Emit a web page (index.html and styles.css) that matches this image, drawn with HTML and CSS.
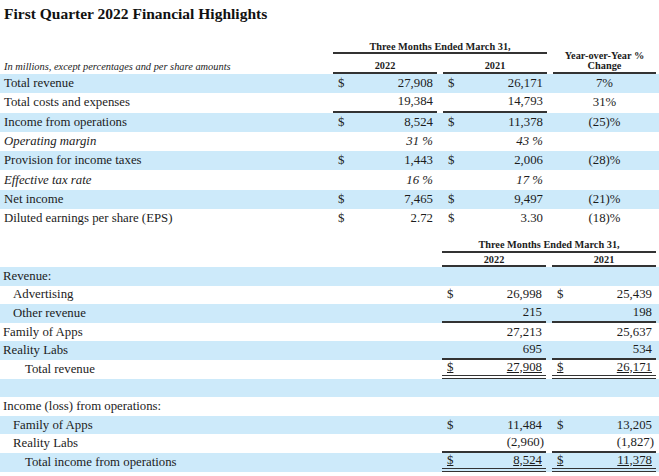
FILE: index.html
```html
<!DOCTYPE html>
<html lang="en">
<head>
<meta charset="utf-8">
<title>First Quarter 2022 Financial Highlights</title>
<link rel="stylesheet" href="styles.css">
</head>
<body>
<div class="page">
  <h1 class="title">First Quarter 2022 Financial Highlights</h1>

  <section class="summary">
    <div class="head-grid">
      <div class="h-span rule-h">Three Months Ended March 31,</div>
      <div class="h-note">In millions, except percentages and per share amounts</div>
      <div class="h-y1 rule-h">2022</div>
      <div class="h-y2 rule-h">2021</div>
      <div class="h-chg rule-h">Year-over-Year %<br>Change</div>
    </div>

    <div class="row blue"><div class="lab">Total revenue</div><div class="amt"><span>$</span><span>27,908</span></div><div class="gap"></div><div class="amt"><span>$</span><span>26,171</span></div><div class="gap"></div><div class="chg">7%</div></div>
    <div class="row"><div class="lab">Total costs and expenses</div><div class="amt rule"><span></span><span>19,384</span></div><div class="gap"></div><div class="amt rule"><span></span><span>14,793</span></div><div class="gap"></div><div class="chg">31%</div></div>
    <div class="row blue"><div class="lab">Income from operations</div><div class="amt"><span>$</span><span>8,524</span></div><div class="gap"></div><div class="amt"><span>$</span><span>11,378</span></div><div class="gap"></div><div class="chg">(25)%</div></div>
    <div class="row"><div class="lab it">Operating margin</div><div class="amt it"><span></span><span>31 %</span></div><div class="gap"></div><div class="amt it"><span></span><span>43 %</span></div><div class="gap"></div><div class="chg"></div></div>
    <div class="row blue"><div class="lab">Provision for income taxes</div><div class="amt"><span>$</span><span>1,443</span></div><div class="gap"></div><div class="amt"><span>$</span><span>2,006</span></div><div class="gap"></div><div class="chg">(28)%</div></div>
    <div class="row"><div class="lab it">Effective tax rate</div><div class="amt it"><span></span><span>16 %</span></div><div class="gap"></div><div class="amt it"><span></span><span>17 %</span></div><div class="gap"></div><div class="chg"></div></div>
    <div class="row blue"><div class="lab">Net income</div><div class="amt"><span>$</span><span>7,465</span></div><div class="gap"></div><div class="amt"><span>$</span><span>9,497</span></div><div class="gap"></div><div class="chg">(21)%</div></div>
    <div class="row"><div class="lab">Diluted earnings per share (EPS)</div><div class="amt"><span>$</span><span>2.72</span></div><div class="gap"></div><div class="amt"><span>$</span><span>3.30</span></div><div class="gap"></div><div class="chg">(18)%</div></div>
  </section>

  <section class="segments">
    <div class="head-grid2">
      <div class="h2-span rule-h">Three Months Ended March 31,</div>
      <div class="h2-y1 rule-h">2022</div>
      <div class="h2-y2 rule-h">2021</div>
    </div>

    <div class="row2 blue"><div class="lab2">Revenue:</div><div class="amt"></div><div class="gap"></div><div class="amt"></div></div>
    <div class="row2"><div class="lab2 ind1">Advertising</div><div class="amt"><span>$</span><span>26,998</span></div><div class="gap"></div><div class="amt"><span>$</span><span>25,439</span></div></div>
    <div class="row2 blue"><div class="lab2 ind1">Other revenue</div><div class="amt rule"><span></span><span>215</span></div><div class="gap"></div><div class="amt rule"><span></span><span>198</span></div></div>
    <div class="row2"><div class="lab2">Family of Apps</div><div class="amt"><span></span><span>27,213</span></div><div class="gap"></div><div class="amt"><span></span><span>25,637</span></div></div>
    <div class="row2 blue"><div class="lab2">Reality Labs</div><div class="amt rule"><span></span><span>695</span></div><div class="gap"></div><div class="amt rule"><span></span><span>534</span></div></div>
    <div class="row2"><div class="lab2 ind2">Total revenue</div><div class="amt total"><span class="ul">$</span><span class="ul">27,908</span></div><div class="gap"></div><div class="amt total"><span class="ul">$</span><span class="ul">26,171</span></div></div>
    <div class="row2 blue"><div class="lab2"></div><div class="amt"></div><div class="gap"></div><div class="amt"></div></div>
    <div class="row2"><div class="lab2">Income (loss) from operations:</div><div class="amt"></div><div class="gap"></div><div class="amt"></div></div>
    <div class="row2 blue"><div class="lab2 ind1">Family of Apps</div><div class="amt"><span>$</span><span>11,484</span></div><div class="gap"></div><div class="amt"><span>$</span><span>13,205</span></div></div>
    <div class="row2"><div class="lab2 ind1">Reality Labs</div><div class="amt rule"><span></span><span class="neg">(2,960)</span></div><div class="gap"></div><div class="amt rule"><span></span><span class="neg">(1,827)</span></div></div>
    <div class="row2 blue"><div class="lab2 ind2">Total income from operations</div><div class="amt total"><span class="ul">$</span><span class="ul">8,524</span></div><div class="gap"></div><div class="amt total"><span class="ul">$</span><span class="ul">11,378</span></div></div>
  </section>
</div>
</body>
</html>
```

FILE: styles.css
```css
html, body {
  margin: 0;
  padding: 0;
  background: #ffffff;
}

body {
  font-family: "Liberation Serif", "Times New Roman", serif;
  font-size: 12.8px;
  color: #1c1c1c;
}

.page {
  width: 659px;
  height: 476px;
  overflow: hidden;
}

.title {
  margin: 0;
  padding: 5px 0 0 4px;
  font-size: 15.5px;
  line-height: 17px;
  font-weight: bold;
  color: #111;
}

.summary {
  margin-top: 15px;
}

.head-grid {
  display: grid;
  grid-template-columns: 333px 104px 6px 104px 6px 103px 3px;
  grid-template-rows: 17px 20px;
  font-size: 10.3px;
  font-weight: bold;
  line-height: 11px;
  text-align: center;
}

.rule-h {
  border-bottom: 2px solid #333;
  align-self: end;
}

.h-span {
  grid-column: 2 / 5;
  grid-row: 1;
}

.h-note {
  grid-column: 1;
  grid-row: 2;
  align-self: end;
  text-align: left;
  padding: 0 0 2px 4px;
  font-weight: normal;
  font-style: italic;
  font-size: 10.4px;
}

.h-y1 {
  grid-column: 2;
  grid-row: 2;
  padding-bottom: 1px;
}

.h-y2 {
  grid-column: 4;
  grid-row: 2;
  padding-bottom: 1px;
}

.h-chg {
  grid-column: 6;
  grid-row: 1 / 3;
  line-height: 10px;
  padding-bottom: 1px;
}

.row {
  display: flex;
  align-items: center;
  height: 19.3px;
  line-height: 15px;
}

.row2 {
  display: flex;
  align-items: center;
  height: 18.6px;
  line-height: 15px;
}

.blue {
  background: #cdeafa;
}

.lab {
  flex: 0 0 333px;
  box-sizing: border-box;
  padding-left: 4px;
}

.lab2 {
  flex: 0 0 442px;
  box-sizing: border-box;
  padding-left: 3px;
}

.ind1 {
  padding-left: 13px;
}

.ind2 {
  padding-left: 25px;
}

.it {
  font-style: italic;
}

.amt {
  flex: 0 0 104px;
  align-self: stretch;
  box-sizing: border-box;
  display: flex;
  justify-content: space-between;
  align-items: center;
  padding: 0 4px 0 5px;
}

.amt.rule {
  border-bottom: 2px solid #333;
}

.amt.total {
  border-bottom: 4px double #333;
}

.ul {
  text-decoration: underline;
  text-underline-offset: 1px;
}

.neg {
  margin-right: -2px;
}

.gap {
  flex: 0 0 6px;
  align-self: stretch;
}

.chg {
  flex: 0 0 103px;
  text-align: center;
}

.head-grid2 {
  display: grid;
  grid-template-columns: 442px 104px 6px 104px 3px;
  grid-template-rows: 24.6px 14px;
  font-size: 10.3px;
  font-weight: bold;
  line-height: 11px;
  text-align: center;
}

.h2-span {
  grid-column: 2 / 5;
  grid-row: 1;
  padding-bottom: 1px;
}

.h2-y1 {
  grid-column: 2;
  grid-row: 2;
}

.h2-y2 {
  grid-column: 4;
  grid-row: 2;
}
```
